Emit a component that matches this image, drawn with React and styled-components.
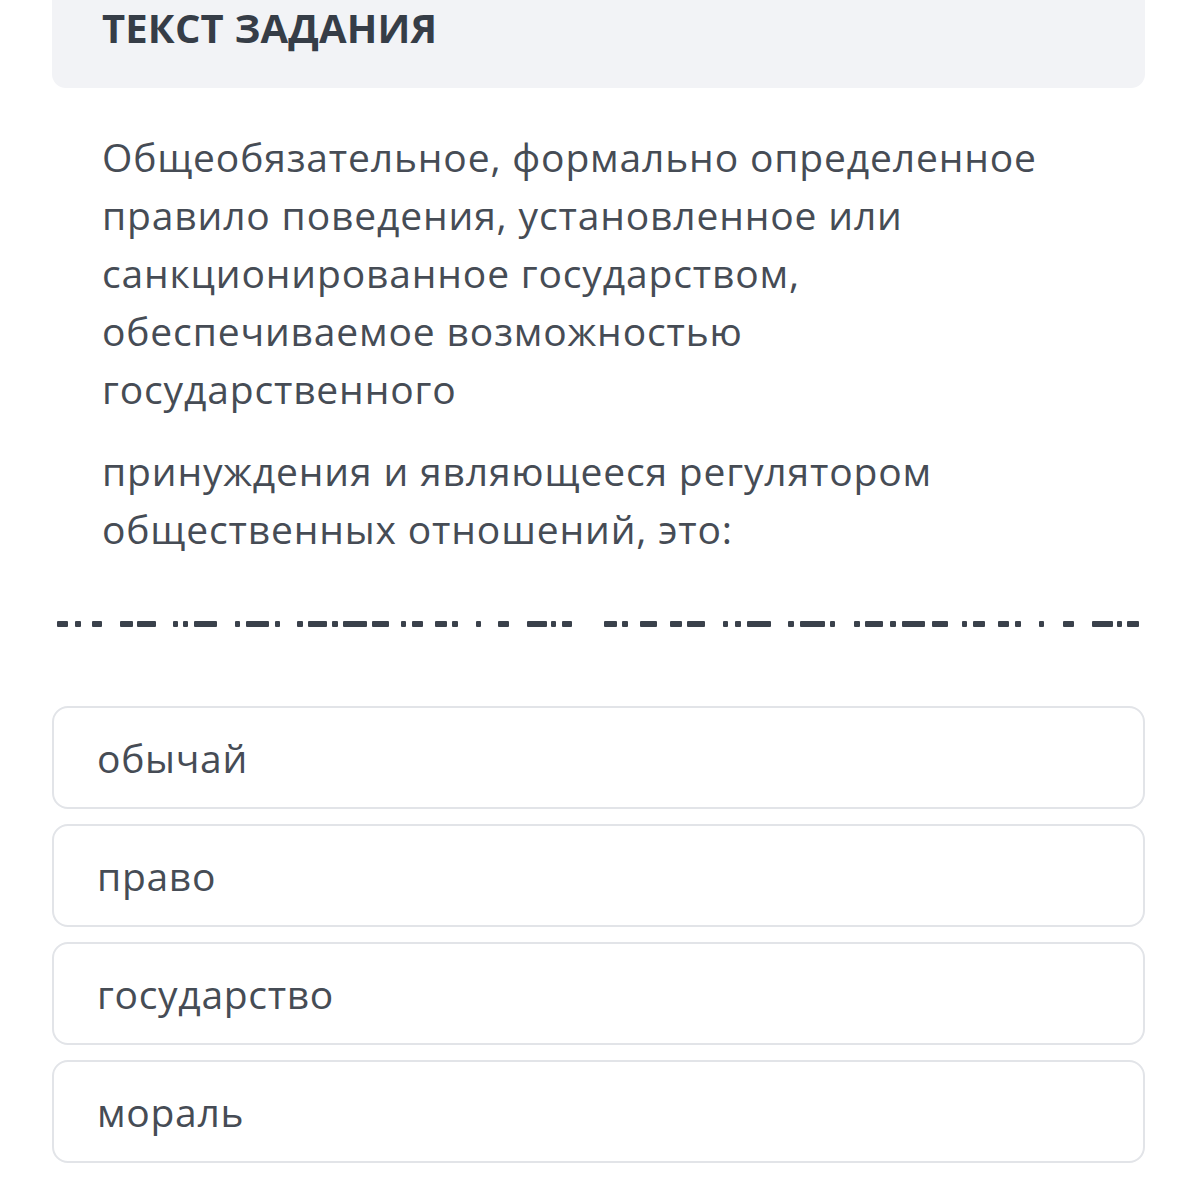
import React from "react";
import styled, { createGlobalStyle } from "styled-components";

const Global = createGlobalStyle`
  html, body { margin: 0; padding: 0; background: #ffffff; }
  body { font-family: "Open Sans", "Noto Sans", sans-serif; }
`;

const Page = styled.div`
  width: 1199px;
  padding: 0 54px 0 52px;
  box-sizing: border-box;
  display: flex;
  flex-direction: column;
`;

const Header = styled.div`
  background: #f2f3f6;
  border-radius: 0 0 14px 14px;
  height: 88px;
  box-sizing: border-box;
  padding: 8px 50px 0;
`;

const Title = styled.h1`
  margin: 0;
  font-size: 40px;
  line-height: 40px;
  font-weight: 700;
  color: #363d47;
  letter-spacing: 0.15px;
`;

const Body = styled.div`
  padding: 40px 50px 0;
  display: flex;
  flex-direction: column;
  gap: 24px;
`;

const Para = styled.p`
  margin: 0;
  font-size: 39px;
  line-height: 58px;
  color: #464c55;
  letter-spacing: 0.85px;
`;

const Divider = styled.svg`
  display: block;
  margin-top: 63px;
  margin-left: -52px;
`;

const Options = styled.div`
  margin-top: 79px;
  display: flex;
  flex-direction: column;
  gap: 15px;
`;

const Option = styled.div`
  height: 103px;
  box-sizing: border-box;
  border: 2px solid #e2e4e8;
  border-radius: 16px;
  display: flex;
  align-items: center;
  padding-left: 43px;
  font-size: 39px;
  color: #464c55;
  letter-spacing: 0.7px;
`;

const g1 = [[57,11],[75,6],[92,10],[120,13],[137,19],[173,5],[183,5],[194,23],[235,5],[246,23],[275,5],[297,6],[308,19],[332,6],[343,24],[372,17],[401,5],[412,11],[435,12],[452,6],[476,5],[498,11],[527,20],[551,5],[562,10]];
const g2 = [[604,13],[622,6],[640,17],[670,12],[687,18],[723,5],[735,6],[747,24],[788,6],[800,25],[830,5],[854,6],[865,18],[890,6],[902,23],[932,16],[962,5],[973,12],[998,11],[1015,6],[1039,5],[1063,11],[1092,21],[1117,5],[1127,12]];

export default function App() {
  const options = ["обычай", "право", "государство", "мораль"];
  return (
    <>
      <Global />
      <Page>
        <Header>
          <Title>ТЕКСТ ЗАДАНИЯ</Title>
        </Header>
        <Body>
          <Para>
            Общеобязательное, формально определенное<br />
            правило поведения, установленное или<br />
            санкционированное государством,<br />
            обеспечиваемое возможностью<br />
            государственного
          </Para>
          <Para>
            принуждения и являющееся регулятором<br />
            общественных отношений, это:
          </Para>
        </Body>
        <Divider width="1199" height="6" viewBox="0 0 1199 6">
          {[...g1, ...g2].map(([x, w], i) => (
            <rect key={i} x={x} y={0} width={w} height={6} rx={1} fill="#3a414b" />
          ))}
        </Divider>
        <Options>
          {options.map((o) => (
            <Option key={o}>{o}</Option>
          ))}
        </Options>
      </Page>
    </>
  );
}
